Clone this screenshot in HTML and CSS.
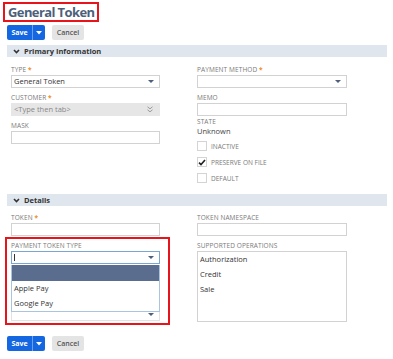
FILE: index.html
```html
<!DOCTYPE html>
<html lang="en">
  <head>
    <meta charset="UTF-8" />
    <meta name="viewport" content="width=device-width, initial-scale=1.0" />
    <title>General Token</title>
    <link rel="stylesheet" href="styles.css">
  </head>
  <body>
    <header class="page-head">
      <h1 class="title">General Token</h1>
      <div class="actions">
        <div class="btn-save">
          <span class="save-main">Save</span>
          <span class="save-more">
            <svg width="6" height="4" viewBox="0 0 6 4"><path d="M0 0h6L3 3.5z" fill="#fff"/></svg>
          </span>
        </div>
        <span class="btn-cancel">Cancel</span>
      </div>
    </header>

    <section class="section">
      <div class="section-bar">
        <svg class="chev" width="7" height="5" viewBox="0 0 7 5"><path d="M1 1l2.5 2.5L6 1" fill="none" stroke="#333" stroke-width="1.6"/></svg>
        Primary Information
      </div>
      <div class="cols">
        <div class="col">
          <div class="field">
            <label>Type <span class="req">*</span></label>
            <div class="input select">General Token<i class="arrow"></i></div>
          </div>
          <div class="field">
            <label>Customer <span class="req">*</span></label>
            <div class="input disabled">&lt;Type then tab&gt;
              <svg class="dbl" width="6" height="7" viewBox="0 0 6 7"><path d="M0.5 0.8l2.5 2 2.5-2M0.5 3.8l2.5 2 2.5-2" fill="none" stroke="#9a9a9a" stroke-width="1"/></svg>
            </div>
          </div>
          <div class="field">
            <label>Mask</label>
            <div class="input"></div>
          </div>
        </div>
        <div class="col">
          <div class="field">
            <label>Payment Method <span class="req">*</span></label>
            <div class="input select"><i class="arrow"></i></div>
          </div>
          <div class="field tight">
            <label>Memo</label>
            <div class="input"></div>
          </div>
          <div class="field state">
            <label>State</label>
            <div class="value">Unknown</div>
          </div>
          <div class="checks">
            <div class="check"><span class="box"></span>Inactive</div>
            <div class="check"><span class="box">
              <svg width="8" height="7" viewBox="0 0 8 7"><path d="M1 3.6l2 2L7 1" fill="none" stroke="#222" stroke-width="1.6"/></svg>
            </span>Preserve on file</div>
            <div class="check"><span class="box"></span>Default</div>
          </div>
        </div>
      </div>
    </section>

    <section class="section">
      <div class="section-bar">
        <svg class="chev" width="7" height="5" viewBox="0 0 7 5"><path d="M1 1l2.5 2.5L6 1" fill="none" stroke="#333" stroke-width="1.6"/></svg>
        Details
      </div>
      <div class="cols">
        <div class="col">
          <div class="field token">
            <label>Token <span class="req">*</span></label>
            <div class="input"></div>
          </div>
          <div class="highlight">
            <label>Payment Token Type</label>
            <div class="dropdown">
              <div class="input select focus"><span class="caret"></span><i class="arrow"></i></div>
              <ul class="options">
                <li class="selected"></li>
                <li>Apple Pay</li>
                <li>Google Pay</li>
              </ul>
            </div>
            <div class="input select under"><i class="arrow"></i></div>
          </div>
        </div>
        <div class="col">
          <div class="field">
            <label>Token Namespace</label>
            <div class="input"></div>
          </div>
          <div class="field last">
            <label>Supported Operations</label>
            <ul class="listbox">
              <li>Authorization</li>
              <li>Credit</li>
              <li>Sale</li>
            </ul>
          </div>
        </div>
      </div>
    </section>

    <div class="actions bottom">
      <div class="btn-save">
        <span class="save-main">Save</span>
        <span class="save-more">
          <svg width="6" height="4" viewBox="0 0 6 4"><path d="M0 0h6L3 3.5z" fill="#fff"/></svg>
        </span>
      </div>
      <span class="btn-cancel">Cancel</span>
    </div>
  </body>
</html>
```

FILE: styles.css
```css
/* token record page */
body {
  margin: 0;
  padding: 2px 6px 0 7px;
  background: #fff;
  font-family: "Open Sans", Arial, sans-serif;
  color: #333;
  width: 380px;
}

.page-head {
  display: flex;
  flex-direction: column;
  align-items: flex-start;
}

.title {
  margin: 0 0 0 -4px;
  height: 16px;
  padding: 0 3px 0 3px;
  border: 2px solid #e8141c;
  font-size: 13px;
  line-height: 16px;
  font-weight: 700;
  color: #4d5f7a;
  letter-spacing: -0.6px;
}

.actions {
  display: flex;
  gap: 7px;
  margin-top: 3px;
}

.actions.bottom {
  margin-top: 8px;
}

.btn-save {
  display: flex;
  height: 15px;
  background: #1467e0;
  border-radius: 2px;
  color: #fff;
  font-size: 7px;
  font-weight: 700;
}

.save-main {
  width: 25px;
  line-height: 15px;
  text-align: center;
  border-right: 1px solid #6aa0ef;
}

.save-more {
  width: 12px;
  display: flex;
  align-items: center;
  justify-content: center;
}

.btn-cancel {
  width: 32px;
  height: 15px;
  line-height: 15px;
  text-align: center;
  background: #e4e4e4;
  border-radius: 2px;
  font-size: 7px;
  font-weight: 600;
  color: #555;
}

.section-bar {
  margin-top: 5px;
  height: 12px;
  display: flex;
  align-items: center;
  gap: 4px;
  padding-left: 6px;
  background: #e0e6ee;
  font-size: 7.5px;
  font-weight: 700;
  color: #333;
}

.chev {
  display: block;
}

.cols {
  display: grid;
  grid-template-columns: 149px 150px;
  column-gap: 37px;
  padding: 9px 0 3px 4px;
}

.section + .section .cols {
  padding-top: 8px;
}

.field {
  margin-bottom: 6px;
}

.field.tight,
.field.state {
  margin-bottom: 2px;
}

.field.token {
  margin-bottom: 1px;
}

.field.last {
  margin-bottom: 0;
}

label {
  display: block;
  height: 8px;
  line-height: 8px;
  margin-bottom: 1px;
  font-size: 6.5px;
  color: #7a7a7a;
  text-transform: uppercase;
  letter-spacing: 0.1px;
}

.req {
  color: #f08a1c;
  font-weight: 700;
}

.input {
  position: relative;
  box-sizing: border-box;
  height: 13px;
  border: 1px solid #d2d2d2;
  background: #fff;
  font-size: 7.5px;
  line-height: 11px;
  padding-left: 2px;
  color: #333;
}

.input.disabled {
  background: #e6e6e6;
  border-color: #e6e6e6;
  color: #888;
}

.dbl {
  position: absolute;
  right: 6px;
  top: 2px;
}

.arrow {
  position: absolute;
  right: 5px;
  top: 4px;
  width: 0;
  height: 0;
  border-left: 3px solid transparent;
  border-right: 3px solid transparent;
  border-top: 3px solid #4d5f7a;
}

.value {
  font-size: 7.5px;
  line-height: 9px;
  color: #444;
}

.checks {
  display: flex;
  flex-direction: column;
}

.check {
  display: flex;
  align-items: center;
  gap: 4px;
  height: 16px;
  font-size: 6.5px;
  color: #7a7a7a;
  text-transform: uppercase;
}

.box {
  box-sizing: border-box;
  width: 10px;
  height: 10px;
  border: 1px solid #d4d4d4;
  display: flex;
  align-items: center;
  justify-content: center;
}

.highlight {
  margin: 0 -10px 0 -6px;
  padding: 3px 8px 2px 4px;
  border: 2px solid #e8141c;
}

.dropdown {
  position: relative;
}

.input.focus {
  border-color: #7aa7cf;
}

.caret {
  display: block;
  margin-top: 2px;
  width: 1px;
  height: 7px;
  background: #333;
}

.options {
  position: absolute;
  left: 0;
  right: 0;
  top: 14px;
  margin: 0;
  padding: 0;
  list-style: none;
  background: #fff;
  border: 1px solid #a9c4de;
  border-top: none;
  z-index: 2;
}

.options li {
  height: 15px;
  line-height: 15px;
  padding-left: 2px;
  font-size: 7.5px;
  color: #333;
}

.options li.selected {
  height: 16px;
  background: #5b6d8e;
}

.input.under {
  margin-top: 44px;
  border-color: #e2e2e2;
}

.listbox {
  box-sizing: border-box;
  height: 71px;
  margin: 0;
  padding: 0 0 0 2px;
  list-style: none;
  border: 1px solid #d2d2d2;
}

.listbox li {
  height: 15px;
  line-height: 15px;
  font-size: 7.5px;
  color: #333;
}
```
